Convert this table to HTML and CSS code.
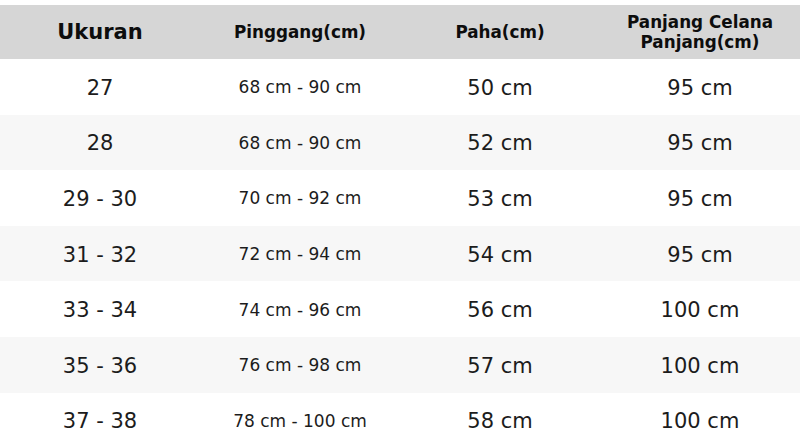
FILE: index.html
```html
<!DOCTYPE html>
<html lang="id">
<head>
<meta charset="utf-8">
<title>Ukuran Celana</title>
<link rel="stylesheet" href="styles.css">
</head>
<body>
<div class="page">
  <div class="row head">
    <div class="cell h-main">Ukuran</div>
    <div class="cell h-sub">Pinggang(cm)</div>
    <div class="cell h-sub">Paha(cm)</div>
    <div class="cell h-sub">Panjang Celana<br>Panjang(cm)</div>
  </div>
  <div class="row">
    <div class="cell big">27</div><div class="cell small">68 cm - 90 cm</div><div class="cell big">50 cm</div><div class="cell big">95 cm</div>
  </div>
  <div class="row alt">
    <div class="cell big">28</div><div class="cell small">68 cm - 90 cm</div><div class="cell big">52 cm</div><div class="cell big">95 cm</div>
  </div>
  <div class="row">
    <div class="cell big">29 - 30</div><div class="cell small">70 cm - 92 cm</div><div class="cell big">53 cm</div><div class="cell big">95 cm</div>
  </div>
  <div class="row alt">
    <div class="cell big">31 - 32</div><div class="cell small">72 cm - 94 cm</div><div class="cell big">54 cm</div><div class="cell big">95 cm</div>
  </div>
  <div class="row">
    <div class="cell big">33 - 34</div><div class="cell small">74 cm - 96 cm</div><div class="cell big">56 cm</div><div class="cell big">100 cm</div>
  </div>
  <div class="row alt">
    <div class="cell big">35 - 36</div><div class="cell small">76 cm - 98 cm</div><div class="cell big">57 cm</div><div class="cell big">100 cm</div>
  </div>
  <div class="row">
    <div class="cell big">37 - 38</div><div class="cell small">78 cm - 100 cm</div><div class="cell big">58 cm</div><div class="cell big">100 cm</div>
  </div>
</div>
</body>
</html>
```
FILE: styles.css
```css
* { box-sizing: border-box; }
html, body { margin: 0; padding: 0; background: #ffffff; }
body {
  font-family: "DejaVu Sans", sans-serif;
  color: #1c1c1c;
  width: 800px;
  height: 448px;
  overflow: hidden;
}
.page {
  padding-top: 5px;
  display: flex;
  flex-direction: column;
}
.row {
  display: grid;
  grid-template-columns: 200px 200px 200px 200px;
  height: 55.6px;
}
.row.head {
  height: 54px;
  background: #d6d6d6;
  color: #0d0d0d;
  font-weight: bold;
}
.row.alt { background: #f7f7f7; }
.cell {
  display: flex;
  align-items: center;
  justify-content: center;
  text-align: center;
}
.h-main { font-size: 21px; }
.h-sub { font-size: 16.8px; line-height: 20px; }
.big { font-size: 21px; padding-top: 2px; }
.small { font-size: 17px; padding-top: 1px; }
```
